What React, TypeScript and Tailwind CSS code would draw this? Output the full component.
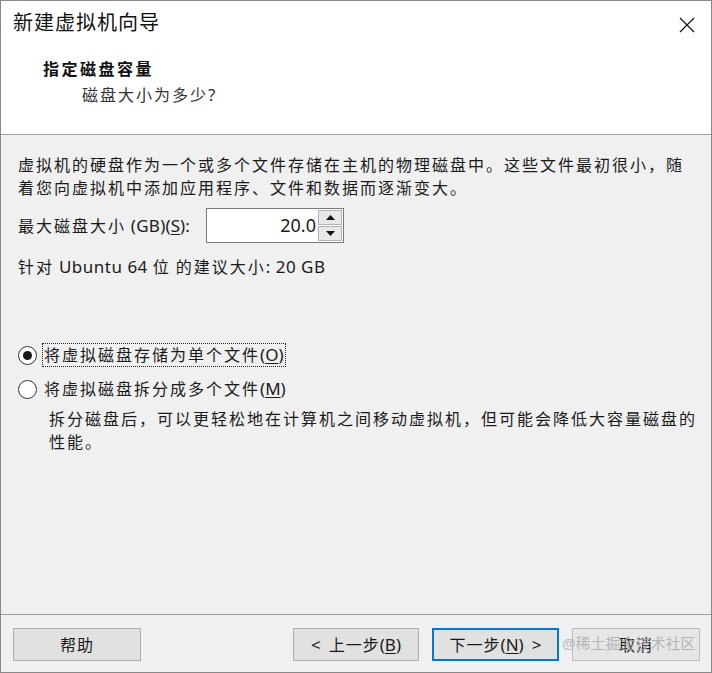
import type { ReactNode } from "react";

// ideographs and full-width punctuation run at the wide dialog pitch, latin stays tight
const CJK_RUN = /([\u2e80-\u9fff\u3000-\u303f\uff00-\uffef]+)/;

function Spaced({ text, track = "tracking-[2px]", latin = "" }: { text: string; track?: string; latin?: string }) {
  const parts = text.split(CJK_RUN).filter(Boolean);
  return (
    <>
      {parts.map((part, i) =>
        CJK_RUN.test(part) ? (
          <span key={i} className={track}>
            {part}
          </span>
        ) : (
          <span key={i} className={latin}>
            {part}
          </span>
        ),
      )}
    </>
  );
}

// "(S)" style access key with the letter underlined
function Key({ k, className }: { k: string; className?: string }) {
  return (
    <span className={className}>
      (<span className="underline underline-offset-2">{k}</span>)
    </span>
  );
}

function Radio({ checked }: { checked?: boolean }) {
  return (
    <span className="flex h-[19px] w-[19px] shrink-0 items-center justify-center rounded-full border border-[#333] bg-white">
      {checked && <span className="h-[9px] w-[9px] rounded-full bg-[#1a1a1a]" />}
    </span>
  );
}

function DialogButton({
  children,
  variant = "normal",
  className,
}: {
  children: ReactNode;
  variant?: "normal" | "default" | "muted";
  className?: string;
}) {
  const look =
    variant === "default"
      ? "border-2 border-[#0078d7] bg-[#e1e1e1]"
      : variant === "muted"
        ? "border border-[#bcbcbc] bg-[#e6e6e6]"
        : "border border-[#adadad] bg-[#e1e1e1]";
  return (
    <div className={`flex h-[33px] items-center justify-center text-[16px] leading-none text-[#1a1a1a] ${look} ${className ?? ""}`}>
      {children}
    </div>
  );
}

export default function App() {
  return (
    <div className="flex h-[673px] w-[712px] flex-col border border-[#8a8a8a] bg-[#f0f0f0] font-['Noto_Sans','Noto_Sans_CJK_SC',sans-serif] text-[#1a1a1a]">
      {/* header */}
      <div className="h-[134px] shrink-0 border-b border-[#a0a0a0] bg-white">
        <div className="flex items-start justify-between pl-[12px] pr-[16px] pt-[8px]">
          <div className="text-[20px] leading-[28px] tracking-[1px] text-[#111]">新建虚拟机向导</div>
          <svg width="16" height="16" viewBox="0 0 16 16" className="mt-[8px]">
            <path d="M1 1 L15 15 M15 1 L1 15" stroke="#111" strokeWidth="1.2" fill="none" />
          </svg>
        </div>
        <div className="mt-[21px] pl-[42px] text-[16px] font-bold leading-[22px] tracking-[2.5px] text-[#111]">
          指定磁盘容量
        </div>
        <div className="mt-[4px] pl-[81px] text-[16px] leading-[22px] text-[#333]">
          <Spaced text="磁盘大小为多少?" latin="text-[17px]" />
        </div>
      </div>

      {/* body */}
      <div className="flex-1 pl-[17px] pt-[19px] text-[16px] leading-[23px]">
        <div>
          <Spaced text="虚拟机的硬盘作为一个或多个文件存储在主机的物理磁盘中。这些文件最初很小，随" />
          <br />
          <Spaced text="着您向虚拟机中添加应用程序、文件和数据而逐渐变大。" />
        </div>

        <div className="mt-[8px] flex h-[35px] items-center">
          <span className="w-[188px]">
            <Spaced text="最大磁盘大小 (GB)" latin="text-[17px] tracking-[0.3px]" />
            <Key k="S" className="text-[17px]" />
            <span className="text-[17px]">:</span>
          </span>
          <div className="flex h-[35px] w-[138px] border border-[#7a7a7a] bg-white">
            <div className="flex flex-1 items-center justify-end pr-[2px] text-[18px]">20.0</div>
            <div className="flex w-[25px] flex-col gap-[1px] py-[1px] pr-[1px]">
              <div className="flex flex-1 items-center justify-center border border-[#b4b4b4] bg-[#e8e8e8]">
                <svg width="9" height="5" viewBox="0 0 9 5">
                  <path d="M0 5 L4.5 0 L9 5 Z" fill="#111" />
                </svg>
              </div>
              <div className="flex flex-1 items-center justify-center border border-[#b4b4b4] bg-[#e8e8e8]">
                <svg width="9" height="5" viewBox="0 0 9 5">
                  <path d="M0 0 L4.5 5 L9 0 Z" fill="#111" />
                </svg>
              </div>
            </div>
          </div>
        </div>

        <div className="mt-[12px]">
          <Spaced text="针对 Ubuntu 64 位 的建议大小: 20 GB" latin="text-[17px] tracking-[0.5px]" />
        </div>

        <div className="mt-[64px] flex h-[24px] items-center">
          <Radio checked />
          <span className="ml-[5px] border border-dotted border-[#222] px-[1px] leading-[21px]">
            <Spaced text="将虚拟磁盘存储为单个文件" />
            <Key k="O" className="text-[17px]" />
          </span>
        </div>
        <div className="mt-[10px] flex h-[24px] items-center">
          <Radio />
          <span className="ml-[6px] px-[1px]">
            <Spaced text="将虚拟磁盘拆分成多个文件" />
            <Key k="M" className="text-[17px]" />
          </span>
        </div>
        <div className="mt-[7px] pl-[31px]">
          <Spaced text="拆分磁盘后，可以更轻松地在计算机之间移动虚拟机，但可能会降低大容量磁盘的" />
          <br />
          <Spaced text="性能。" />
        </div>
      </div>

      {/* footer */}
      <div className="relative flex h-[58px] shrink-0 border-t border-[#a0a0a0] pl-[12px] pr-[11px] pt-[13px]">
        <DialogButton className="w-[128px]">
          <Spaced text="帮助" track="tracking-[1px]" />
        </DialogButton>
        <div className="ml-auto flex gap-[13px]">
          <DialogButton className="w-[126px]">
            <span className="mr-[8px] text-[17px]">&lt;</span>
            <Spaced text="上一步" track="tracking-[1px]" />
            <Key k="B" className="text-[17px]" />
          </DialogButton>
          <DialogButton variant="default" className="w-[127px]">
            <Spaced text="下一步" track="tracking-[1px]" />
            <Key k="N" className="text-[17px]" />
            <span className="ml-[8px] text-[17px]">&gt;</span>
          </DialogButton>
          <DialogButton variant="muted" className="w-[128px]">
            <Spaced text="取消" track="tracking-[1px]" />
          </DialogButton>
        </div>
        <div className="pointer-events-none absolute left-[561px] top-[17px] text-[15px] leading-[22px] text-[#a8a8a8]/80">
          @稀土掘金技术社区
        </div>
      </div>
    </div>
  );
}
